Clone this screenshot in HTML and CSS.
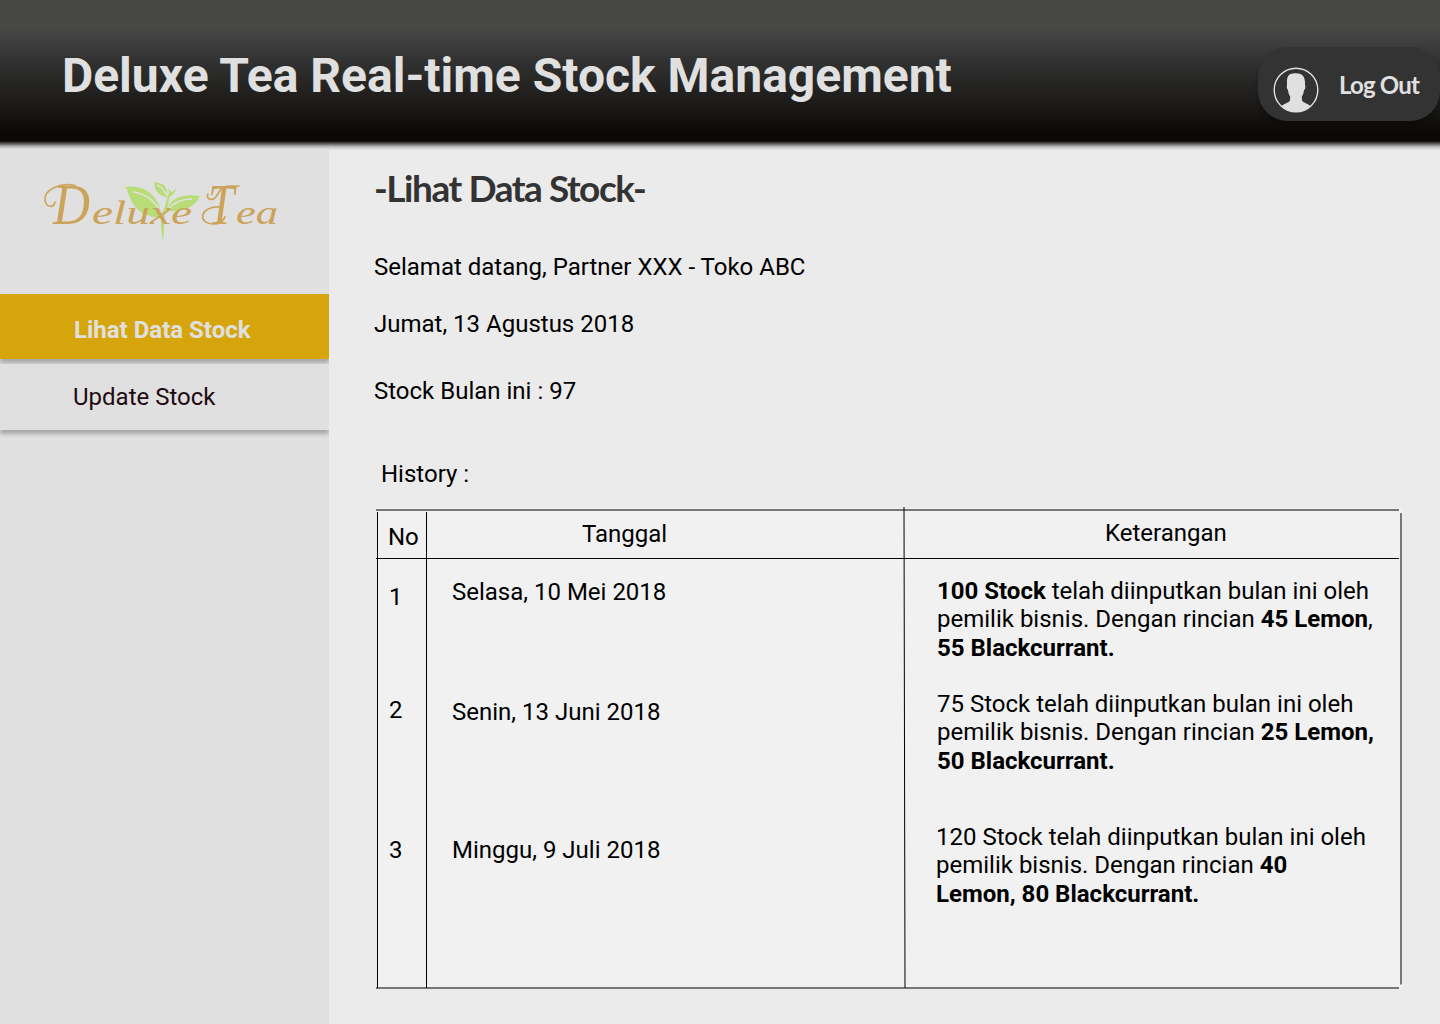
FILE: index.html
```html
<!DOCTYPE html>
<html lang="id">
<head>
<meta charset="utf-8">
<title>Deluxe Tea Real-time Stock Management</title>
<link rel="stylesheet" href="styles.css">
</head>
<body>
<header class="topbar">
  <h1 class="brand-title">Deluxe Tea Real-time Stock Management</h1>
  <a class="logout">
    <svg class="avatar" viewBox="0 0 46 46" width="46" height="46">
      <circle cx="23" cy="23" r="21.8" fill="none" stroke="#e0e0e0" stroke-width="1.4"/>
      <path fill="#e0e0e0" d="M8.500 39.200C11 36.500 16 35.800 17 33.500L17.200 29.600C16 28 15.300 25.500 15 23.200C13.700 22 13.500 19.500 14 17.700C13.500 10 15.500 6.700 20 6.500C28 5.500 32.500 8 32 17.700C32.700 19.500 32.300 22 31 23.200C30.700 25.500 30 28 28.800 29.600L29 33.500C30 35.800 35 36.500 37.500 39.200A21.800 21.800 0 0 1 8.500 39.200Z"/>
    </svg>
    <span class="logout-label">Log Out</span>
  </a>
</header>
<div class="layout">
  <nav class="sidebar">
    <svg class="logo" viewBox="0 0 270 85" width="270" height="85">
      <g fill="#b8dd78">
        <path d="M94 22C112 19 127 28 131 47L132 54C118 50 104 51 97 24Z"/>
        <path d="M137 46C139 33 153 28 170 31C164 43 153 47 137 46Z"/>
        <path d="M124 17C133 18 138 21 137 32C129 31 125 27 124 17Z"/>
        <path d="M139 29C139 26 138 25 138 24L142 27L146 24C145 29 142 30 139 33Z"/>
        <path d="M131 49C136 43 136 36 138 29L140 29C138 38 139 41 135 48C134 57 134 67 133 77C131 67 131 59 131 49Z"/>
      </g>
      <g fill="none" stroke="#e0e0e0" stroke-width="1.500">
        <path d="M103 27C117 29 126 36 132 50"/>
        <path d="M138 44C145 36 154 34 162 34"/>
        <path d="M127 20C133 22 135 27 137 31"/>
      </g>
      <path d="M45 20.500C30 17 14 25 15 35C16 43 24 43 25 37M178 29C176 34 181 36 185 33C189 29 190 21 198 21L209 21M190 42C169 41 167 59 184 59C190 59 193 56 195 52" fill="none" stroke="#cda55c" stroke-width="1.700" stroke-linecap="round"/>
      <text class="logo-text" y="59"><tspan class="logo-cap" x="23" textLength="37" lengthAdjust="spacingAndGlyphs">D</tspan><tspan class="logo-low" x="62" textLength="100" lengthAdjust="spacingAndGlyphs">eluxe</tspan></text>
      <text class="logo-text" y="59"><tspan class="logo-cap" x="178" textLength="26" lengthAdjust="spacingAndGlyphs">T</tspan></text>
      <text class="logo-text" y="59"><tspan class="logo-low" x="206" textLength="42" lengthAdjust="spacingAndGlyphs">ea</tspan></text>
    </svg>
    <a class="nav-item nav-item-active">Lihat Data Stock</a>
    <a class="nav-item">Update Stock</a>
  </nav>
  <main class="content">
    <h2 class="page-title">-Lihat Data Stock-</h2>
    <p class="welcome">Selamat datang, Partner XXX - Toko ABC</p>
    <p class="date">Jumat, 13 Agustus 2018</p>
    <p class="stock">Stock Bulan ini : 97</p>
    <p class="history">History :</p>
    <section class="table">
      <svg class="rules" viewBox="0 0 1027 482" width="1027" height="482">
        <g stroke="#777" stroke-width="2">
          <path d="M0 2H1023M0 480H1023M1025 5V476.500"/>
        </g>
        <path d="M528 -1L529 480" stroke="#000" stroke-width="1"/>
        <path d="M0 50.500H1023M1.500 4V480M50.500 4V480" stroke="#000" stroke-width="1"/>
      </svg>
      <div class="row row-head">
        <div class="no">No</div><div class="tanggal">Tanggal</div><div class="ket">Keterangan</div>
      </div>
      <div class="row row-1">
        <div class="no">1</div><div class="tanggal">Selasa, 10 Mei 2018</div>
        <div class="ket"><b>100 Stock</b> telah diinputkan bulan ini oleh<br>pemilik bisnis. Dengan rincian <b>45 Lemon</b>,<br><b>55 Blackcurrant.</b></div>
      </div>
      <div class="row row-2">
        <div class="no">2</div><div class="tanggal">Senin, 13 Juni 2018</div>
        <div class="ket">75 Stock telah diinputkan bulan ini oleh<br>pemilik bisnis. Dengan rincian <b>25 Lemon,<br>50 Blackcurrant.</b></div>
      </div>
      <div class="row row-3">
        <div class="no">3</div><div class="tanggal">Minggu, 9 Juli 2018</div>
        <div class="ket">120 Stock telah diinputkan bulan ini oleh<br>pemilik bisnis. Dengan rincian <b>40<br>Lemon, 80 Blackcurrant.</b></div>
      </div>
    </section>
  </main>
</div>
</body>
</html>
```
FILE: styles.css
```css
* { box-sizing: border-box; }
body {
  margin: 0;
  width: 1440px;
  height: 1024px;
  overflow: hidden;
  background: #ebebeb;
  color: #000;
  font: 24px/28px Roboto, sans-serif;
}
h1, h2, p { margin: 0; }

.topbar {
  display: flex;
  justify-content: space-between;
  align-items: flex-start;
  height: 150px;
  padding: 47px 0 0 62px;
  background: linear-gradient(#474745 0, #474745 27px, #444 34px, #333 58px, #1b1a18 105px, #090806 135px, #090806 141px, #666563 144px, #b5b5b4 146.500px, #e0e0e0 149px);
}
.brand-title {
  padding-top: 1px;
  color: #e0e0e0;
  font-size: 48px;
  line-height: 56px;
  font-weight: 700;
}
.logout {
  display: flex;
  width: 182px;
  height: 74px;
  padding: 20px 0 0 15px;
  gap: 20px;
  border-radius: 30px;
  background: #333;
  box-shadow: 0 4px 4px rgba(0, 0, 0, .25);
}
.logout-label {
  padding-top: 3px;
  color: #e0e0e0;
  font: 700 24px/29px Lato, sans-serif;
  letter-spacing: -.8px;
  white-space: nowrap;
}

.layout { display: flex; height: 874px; }
.sidebar {
  flex: none;
  display: flex;
  flex-direction: column;
  width: 329px;
  padding-top: 15px;
  overflow: hidden;
  background: #e0e0e0;
}
.logo { flex: none; margin: 0 0 44px 30px; }
.logo-text { font-family: "Liberation Serif", serif; font-style: italic; fill: #cba35b; }
.logo-cap { font-size: 58px; }
.logo-low { font-size: 34px; }
.nav-item {
  height: 66px;
  padding: 19px 0 0 73px;
  color: #1f0a12;
  background: #e0e0e0;
  box-shadow: 0 4px 4px rgba(0, 0, 0, .25);
}
.nav-item-active {
  height: 65px;
  margin-bottom: 5px;
  padding: 22px 0 0 74px;
  color: #e0e0e0;
  background: #d6a40b;
  font-weight: 700;
}

.content { flex: 1; padding: 15px 0 0 45px; }
.page-title {
  margin-bottom: 43px;
  color: #333;
  font: 700 37px/45px Lato, sans-serif;
  letter-spacing: -1.450px;
}
.welcome, .date, .stock, .history { height: 28px; }
.welcome { margin-bottom: 29px; }
.date { margin-bottom: 39px; }
.stock { margin-bottom: 55px; }
.history { margin-bottom: 20px; padding-left: 7px; }

.table {
  position: relative;
  width: 1026px;
  height: 480px;
  margin-left: 3px;
  background: #f1f1f1;
}
.rules { position: absolute; left: -1px; top: 0; overflow: visible; }
.row { display: grid; grid-template-columns: 49px 478px 499px; }
.no { padding-left: 12px; }
.tanggal { padding-left: 26px; }
.ket { padding-left: 33px; line-height: 28.400px; white-space: nowrap; }
.row-head { height: 50px; }
.row-head .no { padding: 15px 0 0 11px; }
.row-head .tanggal { padding: 12px 0 0 156px; }
.row-head .ket { padding: 11px 0 0 201px; }
.row-1 { height: 118px; }
.row-1 .no { padding-top: 25px; }
.row-1 .tanggal { padding-top: 20px; }
.row-1 .ket { padding-top: 19px; }
.row-2 { height: 134px; }
.row-2 .no { padding-top: 20px; }
.row-2 .tanggal { padding-top: 22px; }
.row-2 .ket { padding-top: 14px; }
.row-3 .no, .row-3 .tanggal { padding-top: 26px; }
.row-3 .ket { padding: 13px 0 0 32px; }
```
